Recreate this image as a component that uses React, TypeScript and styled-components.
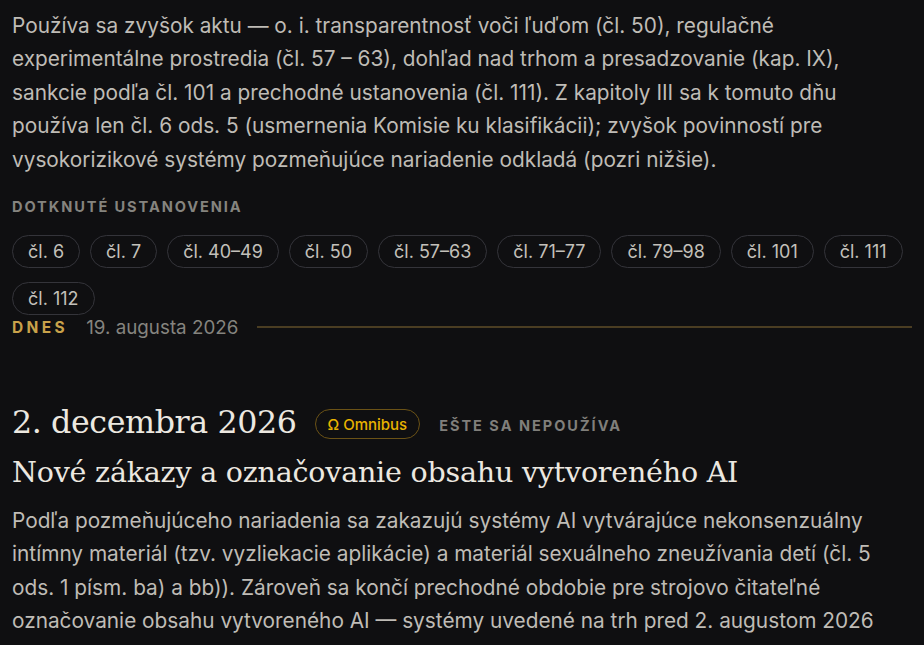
import React from "react";
import styled, { createGlobalStyle } from "styled-components";

const Global = createGlobalStyle`
  html, body { margin: 0; padding: 0; background: #0f0f11; }
  body { font-family: Inter, "Noto Sans", sans-serif; -webkit-font-smoothing: antialiased; }
`;

const Page = styled.div`
  padding: 9px 12px 0 12px;
  background: #0f0f11;
  height: 645px;
  box-sizing: border-box;
  overflow: hidden;
`;

const Body = styled.p<{ $top?: number }>`
  margin: ${(p) => p.$top ?? 0}px 0 0 0;
  font-size: 20.8px;
  line-height: 33.4px;
  color: #bfbcb6;
  max-width: 885px;
`;

const Label = styled.div`
  margin-top: 22px;
  font-size: 14.6px;
  line-height: 18px;
  font-weight: 700;
  letter-spacing: 1.9px;
  color: #85847f;
  text-transform: uppercase;
`;

const Chips = styled.div`
  display: flex;
  flex-wrap: wrap;
  gap: 14px 10px;
  margin-top: 19px;
`;

const Chip = styled.span`
  display: inline-flex;
  align-items: center;
  height: 33px;
  box-sizing: border-box;
  padding: 0 15px;
  border: 1px solid #34343a;
  border-radius: 999px;
  font-size: 18px;
  color: #c3c0ba;
`;

const Today = styled.div`
  display: flex;
  align-items: center;
  height: 22px;
  margin-top: 1px;
`;

const TodayTag = styled.span`
  font-size: 15.5px;
  font-weight: 700;
  letter-spacing: 3.4px;
  color: #c9a24a;
  margin-right: 18px;
`;

const TodayDate = styled.span`
  font-size: 18.8px;
  color: #85847f;
  margin-right: 19px;
`;

const Rule = styled.div`
  flex: 1;
  height: 2px;
  background: #4a3d22;
`;

const Head = styled.div`
  display: flex;
  align-items: center;
  margin-top: 64px;
`;

const DateTitle = styled.h2`
  margin: 0 18px 0 0;
  font-family: "DejaVu Serif", "Liberation Serif", serif;
  font-weight: 400;
  font-size: 31.7px;
  line-height: 40px;
  color: #ece8e0;
  letter-spacing: -0.4px;
`;

const Badge = styled.span`
  display: inline-flex;
  align-items: center;
  height: 30px;
  box-sizing: border-box;
  padding: 0 12px;
  border: 1.5px solid #6b5216;
  border-radius: 999px;
  font-size: 15px;
  font-weight: 500;
  color: #e8b300;
  margin: 4px 19px 0 0;
`;

const Status = styled.span`
  font-size: 14.5px;
  font-weight: 700;
  letter-spacing: 2px;
  color: #807f7b;
  margin-top: 6px;
`;

const Title = styled.h3`
  margin: 12px 0 0 0;
  font-family: "DejaVu Serif", "Liberation Serif", serif;
  font-weight: 400;
  font-size: 28.5px;
  line-height: 38px;
  color: #ece8e0;
  letter-spacing: -0.2px;
`;

const chips = ["čl. 6", "čl. 7", "čl. 40–49", "čl. 50", "čl. 57–63", "čl. 71–77", "čl. 79–98", "čl. 101", "čl. 111", "čl. 112"];

export default function App() {
  return (
    <>
      <Global />
      <Page>
        <Body>
          Používa sa zvyšok aktu — o. i. transparentnosť voči ľuďom (čl. 50), regulačné experimentálne prostredia (čl. 57 – 63), dohľad nad trhom a presadzovanie (kap. IX), sankcie podľa čl. 101 a prechodné ustanovenia (čl. 111). Z kapitoly III sa k tomuto dňu používa len čl. 6 ods. 5 (usmernenia Komisie ku klasifikácii); zvyšok povinností pre vysokorizikové systémy pozmeňujúce nariadenie odkladá (pozri nižšie).
        </Body>
        <Label>Dotknuté ustanovenia</Label>
        <Chips>
          {chips.map((c) => (
            <Chip key={c}>{c}</Chip>
          ))}
        </Chips>
        <Today>
          <TodayTag>DNES</TodayTag>
          <TodayDate>19. augusta 2026</TodayDate>
          <Rule />
        </Today>
        <Head>
          <DateTitle>2. decembra 2026</DateTitle>
          <Badge>Ω Omnibus</Badge>
          <Status>EŠTE SA NEPOUŽÍVA</Status>
        </Head>
        <Title>Nové zákazy a označovanie obsahu vytvoreného AI</Title>
        <Body $top={12}>
          Podľa pozmeňujúceho nariadenia sa zakazujú systémy AI vytvárajúce nekonsenzuálny intímny materiál (tzv. vyzliekacie aplikácie) a materiál sexuálneho zneužívania detí (čl. 5 ods. 1 písm. ba) a bb)). Zároveň sa končí prechodné obdobie pre strojovo čitateľné označovanie obsahu vytvoreného AI — systémy uvedené na trh pred 2. augustom 2026
        </Body>
      </Page>
    </>
  );
}
